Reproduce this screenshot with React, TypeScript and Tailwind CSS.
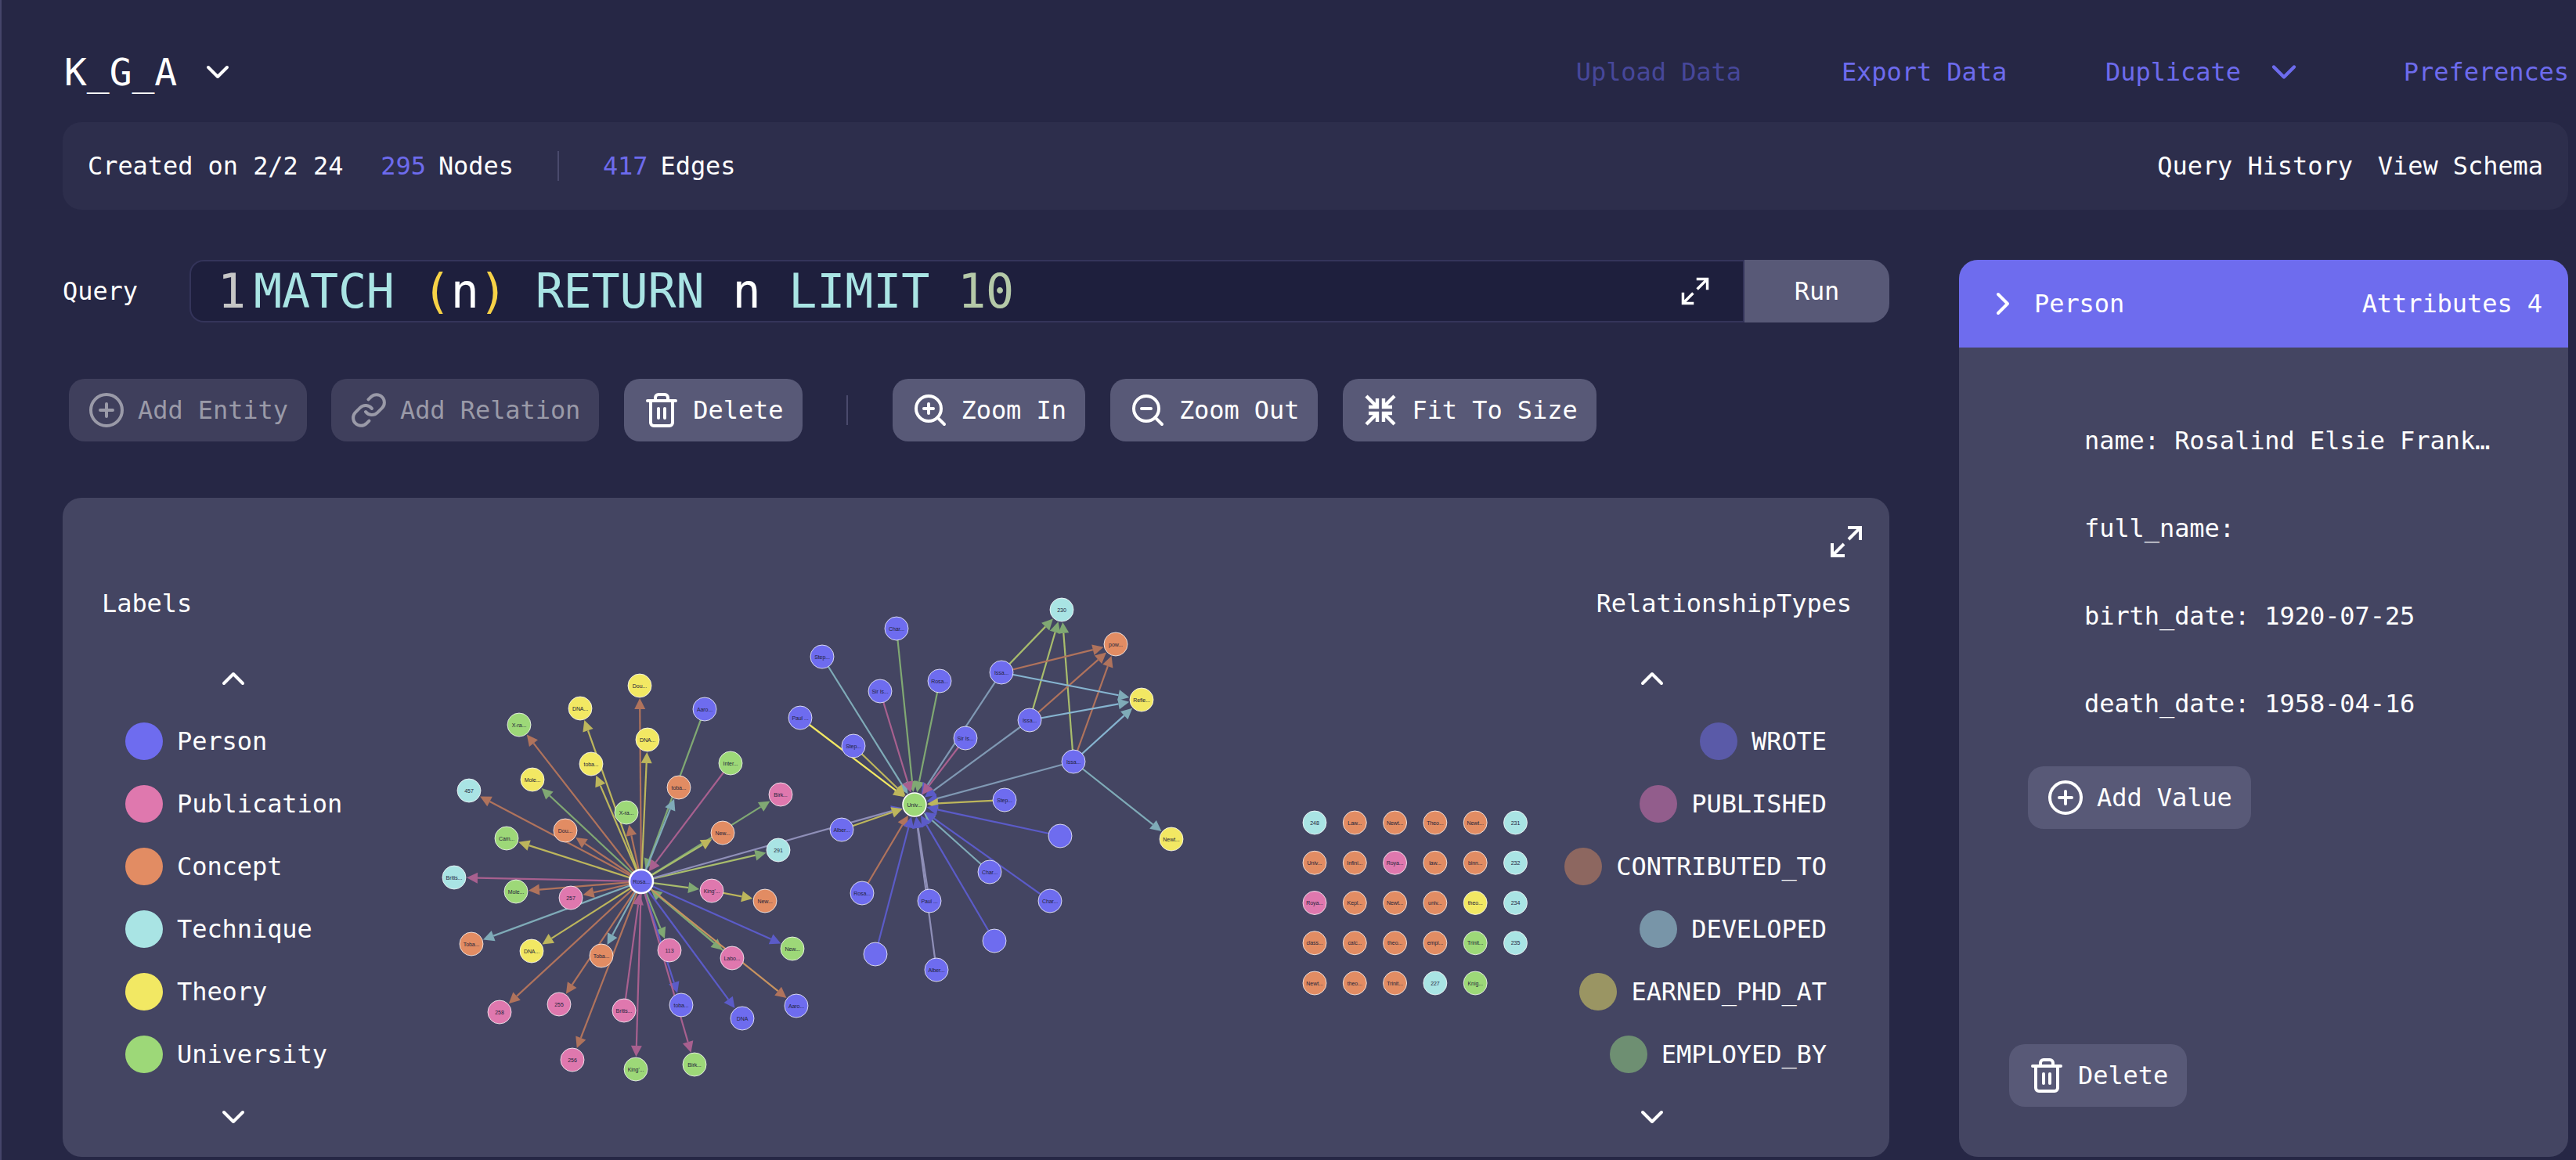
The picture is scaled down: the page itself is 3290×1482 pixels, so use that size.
import { ChevronDown, ChevronRight, ChevronUp, CirclePlus, Link, Trash2, ZoomIn, ZoomOut } from 'lucide-react';
import type { ReactNode } from 'react';

const PERSON = '#6e6cef';
const PINK = '#df78ae';
const ORANGE = '#e28c63';
const TEAL = '#a9e4e4';
const YELLOW = '#f2e863';
const GREEN = '#9dd878';

const BROWN = '#b0735c';
const OLIVE = '#bdb65c';
const SAGE = '#80a873';
const STEEL = '#7fabb8';
const MAUVE = '#a8608f';
const INDIGO = '#5b5bc8';
const LILAC = '#8f8fb8';
const LIME = '#a9bd6c';
const SKY = '#86b4d0';
const SLATE = '#8099b4';
const TAN = '#c8935f';

type GraphNode = { x: number; y: number; c: string; t?: string };

const nodes: Record<string, GraphNode> = {
    R: { x: 819, y: 1126, c: PERSON, t: 'Rosa...' },
    a: { x: 817, y: 876, c: YELLOW, t: 'Dou...' },
    b: { x: 741, y: 905, c: YELLOW, t: 'DNA...' },
    c: { x: 663, y: 926, c: GREEN, t: 'X-ra...' },
    d: { x: 827, y: 945, c: YELLOW, t: 'DNA...' },
    e: { x: 900, y: 906, c: PERSON, t: 'Aaro...' },
    f: { x: 755, y: 976, c: YELLOW, t: 'toba...' },
    g: { x: 680, y: 996, c: YELLOW, t: 'Mole...' },
    h: { x: 599, y: 1010, c: TEAL, t: '457' },
    i: { x: 867, y: 1006, c: ORANGE, t: 'toba...' },
    j: { x: 933, y: 975, c: GREEN, t: 'Inter...' },
    k: { x: 800, y: 1038, c: GREEN, t: 'X-ra...' },
    l: { x: 997, y: 1015, c: PINK, t: 'Birk...' },
    m: { x: 722, y: 1061, c: ORANGE, t: 'Dou...' },
    n: { x: 647, y: 1071, c: GREEN, t: 'Cam...' },
    o: { x: 923, y: 1064, c: ORANGE, t: 'New...' },
    p: { x: 994, y: 1086, c: TEAL, t: '291' },
    q: { x: 580, y: 1121, c: TEAL, t: 'Britis...' },
    r: { x: 659, y: 1139, c: GREEN, t: 'Mole...' },
    s: { x: 729, y: 1147, c: PINK, t: '257' },
    u: { x: 909, y: 1138, c: PINK, t: "King'..." },
    v: { x: 977, y: 1151, c: ORANGE, t: 'New...' },
    w: { x: 602, y: 1206, c: ORANGE, t: 'Toba...' },
    x: { x: 679, y: 1215, c: YELLOW, t: 'DNA...' },
    y: { x: 768, y: 1221, c: ORANGE, t: 'Toba...' },
    z: { x: 855, y: 1214, c: PINK, t: '113' },
    A: { x: 935, y: 1224, c: PINK, t: 'Labo...' },
    B: { x: 1012, y: 1212, c: GREEN, t: 'New...' },
    C: { x: 1017, y: 1285, c: PERSON, t: 'Aaro...' },
    D: { x: 638, y: 1293, c: PINK, t: '258' },
    E: { x: 714, y: 1283, c: PINK, t: '255' },
    F: { x: 797, y: 1291, c: PINK, t: 'Britis...' },
    G: { x: 870, y: 1284, c: PERSON, t: 'toba...' },
    I: { x: 948, y: 1301, c: PERSON, t: 'DNA' },
    J: { x: 731, y: 1354, c: PINK, t: '256' },
    K: { x: 812, y: 1366, c: GREEN, t: "King'..." },
    L: { x: 887, y: 1360, c: GREEN, t: 'Birk...' },

    H: { x: 1168, y: 1028, c: GREEN, t: 'Univ...' },
    h1: { x: 1145, y: 803, c: PERSON, t: 'Char...' },
    h2: { x: 1050, y: 839, c: PERSON, t: 'Step...' },
    h3: { x: 1124, y: 883, c: PERSON, t: 'Sir Is...' },
    h4: { x: 1200, y: 870, c: PERSON, t: 'Rosa...' },
    h5: { x: 1279, y: 859, c: PERSON, t: 'Issa...' },
    h6: { x: 1315, y: 920, c: PERSON, t: 'Issa...' },
    h7: { x: 1233, y: 943, c: PERSON, t: 'Sir Is...' },
    h8: { x: 1022, y: 917, c: PERSON, t: 'Paul ...' },
    h9: { x: 1090, y: 953, c: PERSON, t: 'Step...' },
    h10: { x: 1371, y: 973, c: PERSON, t: 'Issa...' },
    h11: { x: 1283, y: 1022, c: PERSON, t: 'Step...' },
    h12: { x: 1075, y: 1060, c: PERSON, t: 'Alber...' },
    h13: { x: 1354, y: 1068, c: PERSON },
    h14: { x: 1264, y: 1114, c: PERSON, t: 'Char...' },
    h15: { x: 1341, y: 1151, c: PERSON, t: 'Char...' },
    h16: { x: 1101, y: 1141, c: PERSON, t: 'Rosa...' },
    h17: { x: 1187, y: 1151, c: PERSON, t: 'Paul ...' },
    h18: { x: 1270, y: 1202, c: PERSON },
    h19: { x: 1118, y: 1219, c: PERSON },
    h20: { x: 1196, y: 1239, c: PERSON, t: 'Alber...' },
    T: { x: 1356, y: 779, c: TEAL, t: '230' },
    P: { x: 1425, y: 823, c: ORANGE, t: 'pow...' },
    Q: { x: 1458, y: 894, c: YELLOW, t: 'Refle...' },
    N: { x: 1496, y: 1072, c: YELLOW, t: 'Newt...' },
};

// from, to, colour, arrow colour (defaults to the line colour)
const edges: [string, string, string, string?][] = [
    ['R', 'a', BROWN], ['R', 'b', OLIVE], ['R', 'c', BROWN], ['R', 'd', OLIVE],
    ['e', 'R', SAGE], ['R', 'f', OLIVE], ['R', 'g', SAGE], ['R', 'h', BROWN],
    ['R', 'i', STEEL], ['j', 'R', MAUVE], ['R', 'k', BROWN], ['R', 'l', SAGE],
    ['R', 'm', BROWN], ['R', 'n', OLIVE], ['R', 'o', LIME, OLIVE], ['R', 'p', LIME, SAGE],
    ['R', 'q', MAUVE], ['R', 'r', BROWN], ['R', 's', BROWN], ['R', 'u', LIME, SAGE],
    ['u', 'v', OLIVE], ['R', 'w', STEEL], ['R', 'x', OLIVE], ['R', 'y', STEEL],
    ['R', 'z', SAGE], ['A', 'R', SAGE], ['R', 'A', SAGE], ['R', 'B', INDIGO], ['R', 'C', TAN, BROWN],
    ['R', 'D', BROWN], ['R', 'E', BROWN], ['F', 'R', MAUVE], ['R', 'G', INDIGO],
    ['R', 'I', INDIGO], ['R', 'J', BROWN], ['R', 'K', MAUVE], ['R', 'L', MAUVE],

    ['R', 'H', LILAC, INDIGO], ['h1', 'H', SAGE], ['h2', 'H', STEEL], ['h3', 'H', MAUVE],
    ['h4', 'H', SAGE], ['h5', 'H', SLATE, INDIGO], ['h6', 'H', SLATE, INDIGO], ['h7', 'H', MAUVE],
    ['h8', 'H', YELLOW, OLIVE], ['h9', 'H', OLIVE], ['h10', 'H', SLATE, INDIGO], ['h11', 'H', OLIVE],
    ['h12', 'H', OLIVE], ['h13', 'H', INDIGO], ['h14', 'H', STEEL], ['h15', 'H', INDIGO],
    ['h16', 'H', BROWN], ['h17', 'H', LILAC, INDIGO], ['h18', 'H', INDIGO], ['h19', 'H', INDIGO],
    ['h20', 'H', LILAC, INDIGO],

    ['h5', 'T', LIME, SAGE], ['h6', 'T', LIME, SAGE], ['h10', 'T', LIME, SAGE],
    ['h5', 'P', BROWN], ['h6', 'P', BROWN], ['h10', 'P', BROWN],
    ['h5', 'Q', SKY, STEEL], ['h6', 'Q', SKY, STEEL], ['h10', 'Q', SKY, STEEL],
    ['h10', 'N', STEEL],
];

const gridRows: [string, string][][] = [
    [['248', TEAL], ['Law...', ORANGE], ['Newt...', ORANGE], ['Theo...', ORANGE], ['Newt...', ORANGE], ['231', TEAL]],
    [['Univ...', ORANGE], ['Infini...', ORANGE], ['Roya...', PINK], ['law...', ORANGE], ['binn...', ORANGE], ['232', TEAL]],
    [['Roya...', PINK], ['Kepl...', ORANGE], ['Newt...', ORANGE], ['univ...', ORANGE], ['theo...', YELLOW], ['234', TEAL]],
    [['class...', ORANGE], ['calc...', ORANGE], ['theo...', ORANGE], ['empi...', ORANGE], ['Trinit...', GREEN], ['235', TEAL]],
    [['Newt...', ORANGE], ['theo...', ORANGE], ['Trinit...', ORANGE], ['227', TEAL], ['Knig...', GREEN]],
];

const Circle = ({ x, y, c, t, ring = 1 }: GraphNode & { ring?: number }) => (
    <g>
        <circle cx={x} cy={y} r={15} fill={c} stroke="#fff" strokeOpacity={ring > 1 ? 1 : 0.75} strokeWidth={ring} />
        {t && (
            <text x={x} y={y + 2.5} textAnchor="middle" fontSize={7} fontFamily="'Liberation Sans', sans-serif" fill="#23233a">
                {t}
            </text>
        )}
    </g>
);

const Arrow = ({ from, to, color, head }: { from: GraphNode; to: GraphNode; color: string; head: string }) => {
    const dx = to.x - from.x;
    const dy = to.y - from.y;
    const len = Math.hypot(dx, dy);
    const ux = dx / len;
    const uy = dy / len;
    const tipX = to.x - ux * 16;
    const tipY = to.y - uy * 16;
    const baseX = tipX - ux * 14;
    const baseY = tipY - uy * 14;
    const points = `${tipX},${tipY} ${baseX - uy * 7},${baseY + ux * 7} ${baseX + uy * 7},${baseY - ux * 7}`;
    return (
        <g>
            <line x1={from.x} y1={from.y} x2={baseX} y2={baseY} stroke={color} strokeWidth={2.2} />
            <polygon points={points} fill={head} />
        </g>
    );
};

const Graph = () => (
    <svg viewBox="80 636 2333 842" className="absolute inset-0 h-full w-full">
        {edges.map(([f, t, color, head], i) => (
            <Arrow key={i} from={nodes[f]} to={nodes[t]} color={color} head={head ?? color} />
        ))}
        {Object.entries(nodes).map(([id, node]) => (
            <Circle key={id} {...node} ring={id === 'R' ? 2.5 : id === 'H' ? 1.5 : 1} />
        ))}
        {gridRows.map((row, r) =>
            row.map(([t, c], i) => <Circle key={`${r}-${i}`} x={1679 + i * 51.3} y={1051 + r * 51.25} c={c} t={t} />)
        )}
    </svg>
);

const ExpandIcon = ({ size }: { size: number }) => (
    <svg width={size} height={size} viewBox="-1 -1 22 22" fill="none" stroke="#fff" strokeWidth="2">
        <path d="M19 1 11.5 8.5M11 1H19V9" />
        <path d="M1 19 8.5 11.5M1 11V19H9" />
    </svg>
);

const FitIcon = () => (
    <svg width={48} height={48} viewBox="0 0 24 24" fill="none" stroke="#fff" strokeWidth="2.2" className="shrink-0">
        <path d="M3 3 10 10M10 4.5V10H4.5" />
        <path d="M21 3 14 10M14 4.5V10H19.5" />
        <path d="M3 21 10 14M10 19.5V14H4.5" />
        <path d="M21 21 14 14M14 19.5V14H19.5" />
    </svg>
);

const Button = ({ icon, label, disabled }: { icon: ReactNode; label: string; disabled?: boolean }) => (
    <button
        className={`flex h-[80px] items-center gap-4 rounded-[20px] px-6 ${
            disabled ? 'bg-[#3f3f5c] text-[#9a9aa8]' : 'bg-[#585977] text-white'
        }`}
    >
        {icon}
        <span>{label}</span>
    </button>
);

const LegendDot = ({ color }: { color: string }) => (
    <span className="h-[48px] w-[48px] shrink-0 rounded-full" style={{ backgroundColor: color }} />
);

const labels = [
    ['Person', PERSON],
    ['Publication', PINK],
    ['Concept', ORANGE],
    ['Technique', TEAL],
    ['Theory', YELLOW],
    ['University', GREEN],
];

const relationships = [
    ['WROTE', '#5a5aa8'],
    ['PUBLISHED', '#925d8c'],
    ['CONTRIBUTED_TO', '#8d6760'],
    ['DEVELOPED', '#7895a8'],
    ['EARNED_PHD_AT', '#9a9563'],
    ['EMPLOYED_BY', '#6e8f72'],
];

const attributes = ['name: Rosalind Elsie Frank…', 'full_name:', 'birth_date: 1920-07-25', 'death_date: 1958-04-16'];

export default function App() {
    return (
        <div className="h-[1482px] w-[3290px] overflow-hidden border-l-2 border-[#45456a] bg-[#262745] pl-[78px] pr-[10px] font-['DejaVu_Sans_Mono',monospace] text-[32px] leading-[40px] tracking-[-0.07px] text-white">
            {/* Top nav */}
            <header className="flex h-[156px] items-center justify-between pt-[28px]">
                <div className="ml-[2px] flex items-center gap-[28px]">
                    <span className="text-[48px] leading-[56px]">K_G_A</span>
                    <ChevronDown size={48} />
                </div>
                <nav className="flex items-center text-[#6d6bed]">
                    <span className="mr-[128px] text-[#47479a]">Upload Data</span>
                    <span className="mr-[126px]">Export Data</span>
                    <span>Duplicate</span>
                    <ChevronDown size={52} className="ml-[29px] mr-[127px]" />
                    <span className="-mr-px">Preferences</span>
                </nav>
            </header>

            {/* Info bar */}
            <section className="flex h-[112px] items-center justify-between rounded-[24px] bg-[#2d2e4c] pl-[32px] pr-[32px]">
                <div className="flex items-center">
                    <span>Created on 2/2 24</span>
                    <span className="ml-[48px] text-[#6d6bed]">295</span>
                    <span className="ml-[16px]">Nodes</span>
                    <span className="ml-[56px] h-[38px] w-[2px] bg-[#4a4a6c]" />
                    <span className="ml-[56px] text-[#6d6bed]">417</span>
                    <span className="ml-[16px]">Edges</span>
                </div>
                <div className="flex items-center gap-[32px]">
                    <span>Query History</span>
                    <span>View Schema</span>
                </div>
            </section>

            <div className="mt-[64px] flex gap-[89px]">
                <main className="w-[2333px] shrink-0">
                    {/* Query */}
                    <div className="flex h-[80px] items-center">
                        <span className="w-[162px]">Query</span>
                        <div className="flex h-full flex-1 items-center justify-between rounded-l-[18px] border-2 border-[#34345a] bg-[#1e1f3d] pl-[34px] pr-[42px] text-[60px] leading-[70px] tracking-[-0.16px]">
                            <div className="flex">
                                <span className="w-[46px] text-[#c6c6c6]">1</span>
                                <span className="whitespace-pre text-[#a9e4e4]">
                                    MATCH <span className="text-[#f7d247]">(</span>
                                    <span className="text-white">n</span>
                                    <span className="text-[#f7d247]">)</span> RETURN <span className="text-white">n</span> LIMIT{' '}
                                    <span className="text-[#b5c9a8]">10</span>
                                </span>
                            </div>
                            <ExpandIcon size={38} />
                        </div>
                        <button className="h-full w-[185px] rounded-r-[24px] bg-[#585977]">Run</button>
                    </div>

                    {/* Toolbar */}
                    <div className="mt-[72px] flex items-center pl-[8px]">
                        <Button disabled icon={<CirclePlus size={48} strokeWidth={2} />} label="Add Entity" />
                        <div className="ml-[31px]">
                            <Button disabled icon={<Link size={48} strokeWidth={2} />} label="Add Relation" />
                        </div>
                        <div className="ml-[32px]">
                            <Button icon={<Trash2 size={48} strokeWidth={2} />} label="Delete" />
                        </div>
                        <span className="ml-[56px] h-[38px] w-[2px] bg-[#4a4a6c]" />
                        <div className="ml-[57px] flex gap-[32px]">
                            <Button icon={<ZoomIn size={48} strokeWidth={2} />} label="Zoom In" />
                            <Button icon={<ZoomOut size={48} strokeWidth={2} />} label="Zoom Out" />
                            <Button icon={<FitIcon />} label="Fit To Size" />
                        </div>
                    </div>

                    {/* Graph panel */}
                    <section className="relative mt-[72px] flex h-[842px] justify-between rounded-[24px] bg-[#444562] pl-[50px] pr-[48px] pt-[115px]">
                        <Graph />
                        <div className="relative">
                            <div>Labels</div>
                            <ChevronUp size={48} className="ml-[144px] mt-[52px]" />
                            <ul className="mt-[32px] flex flex-col gap-[32px] pl-[30px]">
                                {labels.map(([name, color]) => (
                                    <li key={name} className="flex h-[48px] items-center gap-[18px]">
                                        <LegendDot color={color} />
                                        {name}
                                    </li>
                                ))}
                            </ul>
                            <ChevronDown size={48} className="ml-[144px] mt-[32px]" />
                        </div>
                        <div className="relative flex flex-col items-end">
                            <div>RelationshipTypes</div>
                            <ChevronUp size={48} className="mr-[231px] mt-[52px]" />
                            <ul className="mt-[32px] flex flex-col items-end gap-[32px] pr-[32px]">
                                {relationships.map(([name, color]) => (
                                    <li key={name} className="flex h-[48px] items-center gap-[18px]">
                                        <LegendDot color={color} />
                                        {name}
                                    </li>
                                ))}
                            </ul>
                            <ChevronDown size={48} className="mr-[231px] mt-[32px]" />
                        </div>
                        <div className="absolute right-[33px] top-[34px]">
                            <ExpandIcon size={44} />
                        </div>
                    </section>
                </main>

                {/* Details panel */}
                <aside className="flex h-[1146px] flex-1 flex-col overflow-hidden rounded-[24px] bg-[#444562]">
                    <div className="flex h-[112px] items-center justify-between bg-[#6e6cee] pl-[32px] pr-[33px]">
                        <div className="flex items-center gap-[16px]">
                            <ChevronRight size={48} />
                            <span>Person</span>
                        </div>
                        <span>Attributes 4</span>
                    </div>
                    <div className="flex flex-1 flex-col pt-[99px]">
                        <div className="flex flex-col gap-[72px] pl-[160px]">
                            {attributes.map((row) => (
                                <div key={row} className="whitespace-pre">
                                    {row}
                                </div>
                            ))}
                        </div>
                        <div className="ml-[88px] mt-[60px] self-start">
                            <Button icon={<CirclePlus size={48} strokeWidth={2} />} label="Add Value" />
                        </div>
                        <div className="mb-[64px] ml-[64px] mt-auto self-start">
                            <Button icon={<Trash2 size={48} strokeWidth={2} />} label="Delete" />
                        </div>
                    </div>
                </aside>
            </div>
        </div>
    );
}
